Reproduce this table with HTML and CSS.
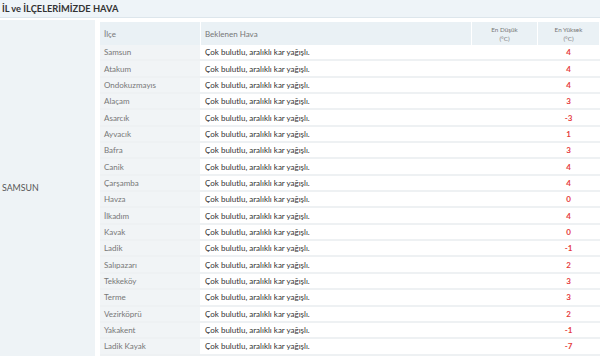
FILE: index.html
```html
<!DOCTYPE html>
<html>
<head>
    <title>İl ve İlçelerimizde Hava</title>
    <link rel="stylesheet" href="styles.css">
</head>
<body>

    <div class="title-bar">İL ve İLÇELERİMİZDE HAVA</div>

    <div class="region">
        <div class="region-name">SAMSUN</div>
        <table class="forecast">
            <tr>
                <th class="col-ilce">İlçe</th>
                <th class="col-desc">Beklenen Hava</th>
                <th class="col-temp">En Düşük<br>(°C)</th>
                <th class="col-temp">En Yüksek<br>(°C)</th>
            </tr>
            <tr><td class="ilce">Samsun</td><td class="desc">Çok bulutlu, aralıklı kar yağışlı.</td><td></td><td class="max">4</td></tr>
            <tr><td class="ilce">Atakum</td><td class="desc">Çok bulutlu, aralıklı kar yağışlı.</td><td></td><td class="max">4</td></tr>
            <tr><td class="ilce">Ondokuzmayıs</td><td class="desc">Çok bulutlu, aralıklı kar yağışlı.</td><td></td><td class="max">4</td></tr>
            <tr><td class="ilce">Alaçam</td><td class="desc">Çok bulutlu, aralıklı kar yağışlı.</td><td></td><td class="max">3</td></tr>
            <tr><td class="ilce">Asarcık</td><td class="desc">Çok bulutlu, aralıklı kar yağışlı.</td><td></td><td class="max">-3</td></tr>
            <tr><td class="ilce">Ayvacık</td><td class="desc">Çok bulutlu, aralıklı kar yağışlı.</td><td></td><td class="max">1</td></tr>
            <tr><td class="ilce">Bafra</td><td class="desc">Çok bulutlu, aralıklı kar yağışlı.</td><td></td><td class="max">3</td></tr>
            <tr><td class="ilce">Canik</td><td class="desc">Çok bulutlu, aralıklı kar yağışlı.</td><td></td><td class="max">4</td></tr>
            <tr><td class="ilce">Çarşamba</td><td class="desc">Çok bulutlu, aralıklı kar yağışlı.</td><td></td><td class="max">4</td></tr>
            <tr><td class="ilce">Havza</td><td class="desc">Çok bulutlu, aralıklı kar yağışlı.</td><td></td><td class="max">0</td></tr>
            <tr><td class="ilce">İlkadım</td><td class="desc">Çok bulutlu, aralıklı kar yağışlı.</td><td></td><td class="max">4</td></tr>
            <tr><td class="ilce">Kavak</td><td class="desc">Çok bulutlu, aralıklı kar yağışlı.</td><td></td><td class="max">0</td></tr>
            <tr><td class="ilce">Ladik</td><td class="desc">Çok bulutlu, aralıklı kar yağışlı.</td><td></td><td class="max">-1</td></tr>
            <tr><td class="ilce">Salıpazarı</td><td class="desc">Çok bulutlu, aralıklı kar yağışlı.</td><td></td><td class="max">2</td></tr>
            <tr><td class="ilce">Tekkeköy</td><td class="desc">Çok bulutlu, aralıklı kar yağışlı.</td><td></td><td class="max">3</td></tr>
            <tr><td class="ilce">Terme</td><td class="desc">Çok bulutlu, aralıklı kar yağışlı.</td><td></td><td class="max">3</td></tr>
            <tr><td class="ilce">Vezirköprü</td><td class="desc">Çok bulutlu, aralıklı kar yağışlı.</td><td></td><td class="max">2</td></tr>
            <tr><td class="ilce">Yakakent</td><td class="desc">Çok bulutlu, aralıklı kar yağışlı.</td><td></td><td class="max">-1</td></tr>
            <tr><td class="ilce">Ladik Kayak</td><td class="desc">Çok bulutlu, aralıklı kar yağışlı.</td><td></td><td class="max">-7</td></tr>
        </table>
    </div>

</body>
</html>
```

FILE: styles.css
```css
body {
    font-family: Lato, "Open Sans", sans-serif;
    margin: 0;
    background: #fff;
    color: #333;
}
.title-bar {
    background: #eef4f8;
    border-bottom: 1px solid #dde6ec;
    height: 17px;
    line-height: 17px;
    padding-left: 2px;
    font-size: 9.3px;
    font-weight: bold;
    color: #333;
}
.region {
    display: flex;
    margin-top: 2px;
}
.region-name {
    width: 93px;
    padding-left: 2px;
    background: #eef3f6;
    display: flex;
    align-items: center;
    font-size: 8.8px;
    color: #555;
    margin-right: 5px;
}
.forecast {
    flex-grow: 1;
    border-collapse: collapse;
    margin-top: 2px;
    font-size: 8px;
}
.forecast th {
    background: #eaf1f5;
    color: #777;
    font-weight: normal;
    height: 23px;
    padding: 0 4px;
    border-right: 1px solid #fff;
    text-align: left;
}
.forecast th.col-temp {
    text-align: center;
    font-size: 6.3px;
    line-height: 9px;
}
.col-ilce {
    width: 92px;
}
.col-temp:nth-child(3) {
    width: 57px;
}
.col-temp:nth-child(4) {
    width: 53px;
}
.forecast td {
    height: 14.35px;
    padding: 0 4px;
    border-bottom: 2px solid #eef1f3;
    border-right: 1px solid #fff;
}
.forecast td.ilce {
    background: #f1f4f6;
    color: #777;
}
.forecast td.desc {
    color: #333;
}
.forecast td.max {
    text-align: center;
    color: #e53b3b;
    font-weight: bold;
}
```
